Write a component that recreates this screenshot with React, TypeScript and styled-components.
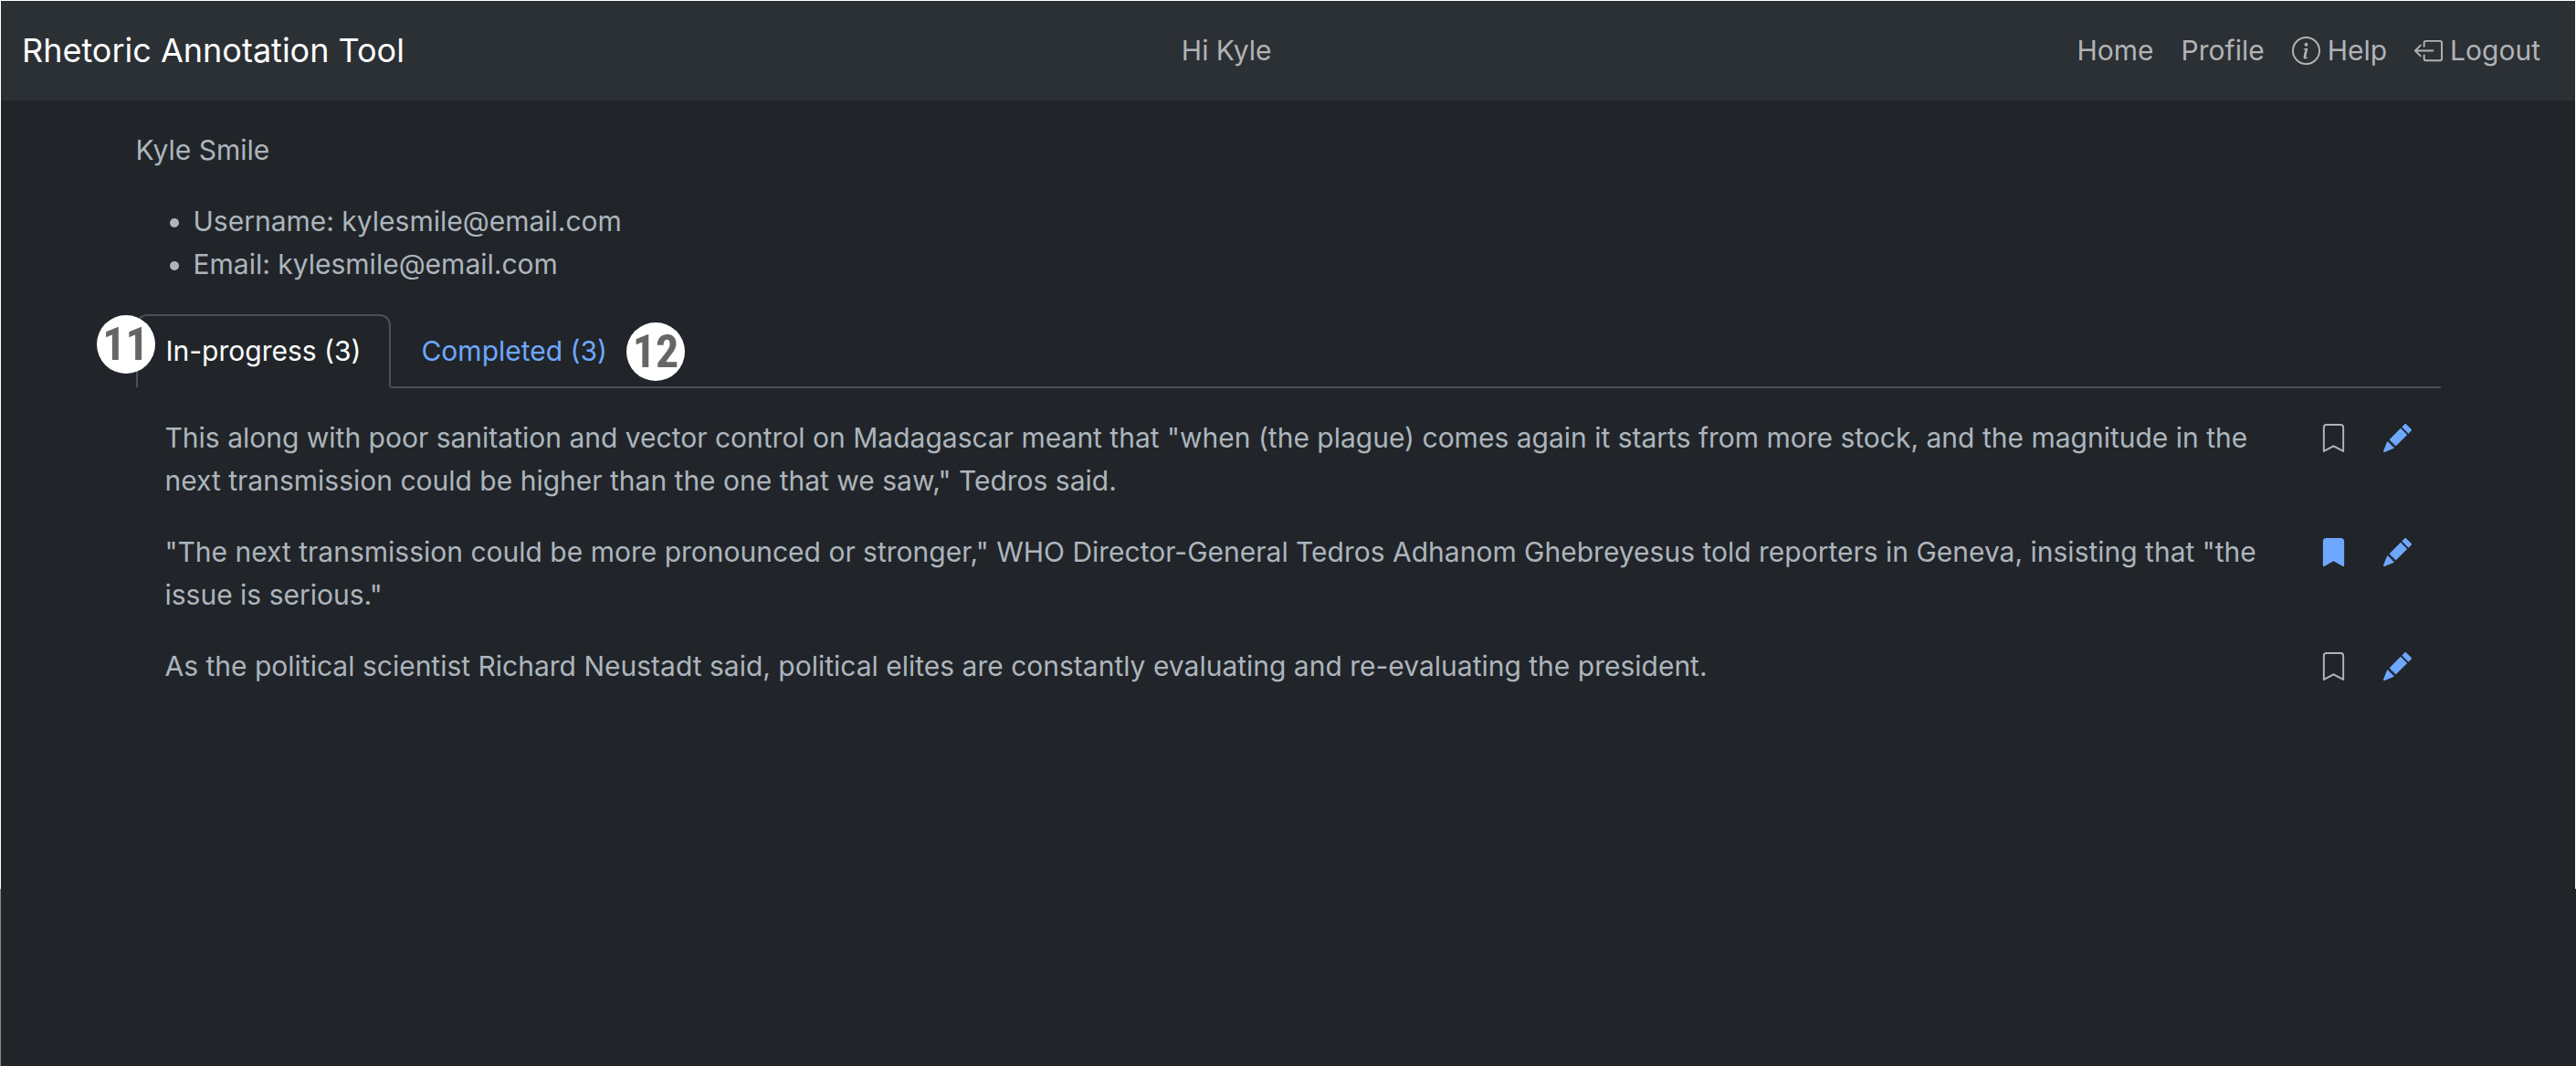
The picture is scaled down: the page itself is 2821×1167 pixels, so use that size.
import React, { useState } from "react";
import styled, { createGlobalStyle } from "styled-components";
import {
  BsBookmark,
  BsBookmarkFill,
  BsBoxArrowLeft,
  BsInfoCircle,
  BsPencilFill,
} from "react-icons/bs";

const color = {
  page: "#212529",
  bar: "#2b3035",
  text: "#adb5bd",
  nav: "#b1b3b5",
  strong: "#ffffff",
  link: "#6ea8fe",
  border: "#495057",
  badge: "#666666",
  edge: "#868a8d",
};

const GlobalStyle = createGlobalStyle`
  *, *::before, *::after { box-sizing: border-box; }
  body {
    margin: 0;
    min-height: 100vh;
    background: linear-gradient(90deg, ${color.edge} 1px, ${color.page} 1px);
    color: ${color.text};
    font-family: Inter, "Liberation Sans", sans-serif;
    font-size: 30px;
    line-height: 47px;
  }
`;

const Frame = styled.div`
  min-height: 973px;
  border: 1px solid ${color.strong};
  border-bottom: 0;
  background: ${color.page};
`;

const Navbar = styled.header`
  display: flex;
  align-items: center;
  justify-content: space-between;
  padding: 25px 23px;
  background: ${color.bar};
`;

const Brand = styled.a`
  color: ${color.strong};
  font-size: 36px;
  line-height: 59px;
  text-decoration: none;
`;

const Greeting = styled.span`
  padding-right: 16px;
  color: ${color.nav};
`;

const NavLinks = styled.nav`
  display: flex;
`;

const NavLink = styled.a`
  display: flex;
  align-items: center;
  gap: 8px;
  padding: 0 15px;
  color: ${color.nav};
  text-decoration: none;

  svg {
    width: 31px;
    height: 31px;
  }
`;

const Container = styled.main`
  max-width: 2570px;
  margin: 0 auto;
  padding: 31px 23px;
`;

const ProfileName = styled.p`
  margin: 0 0 31px;
`;

const Details = styled.ul`
  margin: 0 0 31px;
  padding-left: 63px;
`;

const TabList = styled.div`
  display: flex;
  border-bottom: 2px solid ${color.border};
`;

const TabItem = styled.div`
  position: relative;
  margin-bottom: -2px;
`;

const Tab = styled.button<{ $active: boolean }>`
  display: block;
  padding: 15px 31px;
  border: 2px solid ${(p) => (p.$active ? color.border : "transparent")};
  border-bottom-color: ${(p) => (p.$active ? color.page : "transparent")};
  border-radius: 12px 12px 0 0;
  background: ${(p) => (p.$active ? color.page : "transparent")};
  color: ${(p) => (p.$active ? color.strong : color.link)};
  font: inherit;
  cursor: pointer;
`;

const Badge = styled.span<{ $side: "left" | "right" }>`
  position: absolute;
  top: ${(p) => (p.$side === "left" ? "1px" : "9px")};
  ${(p) => (p.$side === "left" ? "left: -43px;" : "right: -52px;")}
  width: 64px;
  height: 64px;
  border-radius: 50%;
  background: ${color.strong};
  color: ${color.badge};
  font-family: "Roboto Condensed", "Liberation Sans", sans-serif;
  font-size: 50px;
  font-weight: 700;
  line-height: 64px;
  text-align: center;
`;

const Entries = styled.ul`
  display: flex;
  flex-direction: column;
  gap: 31px;
  margin: 0;
  padding: 31px 32px;
  list-style: none;
`;

const Entry = styled.li`
  display: flex;
  align-items: flex-start;
  justify-content: space-between;
  gap: 39px;
`;

const EntryText = styled.p`
  flex: 1;
  margin: 0;
`;

const Actions = styled.div`
  display: flex;
  gap: 39px;
`;

const IconButton = styled.button<{ $accent: boolean }>`
  display: flex;
  align-items: center;
  height: 47px;
  padding: 0;
  border: 0;
  background: none;
  color: ${(p) => (p.$accent ? color.link : color.text)};
  cursor: pointer;

  svg {
    width: 31px;
    height: 31px;
  }
`;

const sentences = [
  'This along with poor sanitation and vector control on Madagascar meant that "when (the plague) comes again it starts from more stock, and the magnitude in the next transmission could be higher than the one that we saw," Tedros said.',
  '"The next transmission could be more pronounced or stronger," WHO Director-General Tedros Adhanom Ghebreyesus told reporters in Geneva, insisting that "the issue is serious."',
  "As the political scientist Richard Neustadt said, political elites are constantly evaluating and re-evaluating the president.",
];

const tabs = [
  { id: "progress", label: "In-progress (3)", badge: "11", side: "left" as const },
  { id: "completed", label: "Completed (3)", badge: "12", side: "right" as const },
];

export default function App() {
  const [active, setActive] = useState("progress");
  const [marked, setMarked] = useState([false, true, false]);

  const toggle = (index: number) =>
    setMarked((all) => all.map((value, i) => (i === index ? !value : value)));

  return (
    <>
      <GlobalStyle />
      <Frame>
        <Navbar>
          <Brand href="#home">Rhetoric Annotation Tool</Brand>
          <Greeting>Hi Kyle</Greeting>
          <NavLinks>
            <NavLink href="#home">Home</NavLink>
            <NavLink href="#profile">Profile</NavLink>
            <NavLink href="#help">
              <BsInfoCircle />
              Help
            </NavLink>
            <NavLink href="#logout">
              <BsBoxArrowLeft />
              Logout
            </NavLink>
          </NavLinks>
        </Navbar>
        <Container>
          <ProfileName>Kyle Smile</ProfileName>
          <Details>
            <li>Username: kylesmile@email.com</li>
            <li>Email: kylesmile@email.com</li>
          </Details>
          <TabList role="tablist">
            {tabs.map((tab) => (
              <TabItem key={tab.id} role="presentation">
                <Tab
                  type="button"
                  role="tab"
                  aria-selected={active === tab.id}
                  $active={active === tab.id}
                  onClick={() => setActive(tab.id)}
                >
                  {tab.label}
                </Tab>
                <Badge $side={tab.side}>{tab.badge}</Badge>
              </TabItem>
            ))}
          </TabList>
          <Entries role="tabpanel">
            {sentences.map((sentence, i) => (
              <Entry key={sentence}>
                <EntryText>{sentence}</EntryText>
                <Actions>
                  <IconButton
                    type="button"
                    aria-label="Bookmark"
                    aria-pressed={marked[i]}
                    $accent={marked[i]}
                    onClick={() => toggle(i)}
                  >
                    {marked[i] ? <BsBookmarkFill /> : <BsBookmark />}
                  </IconButton>
                  <IconButton type="button" aria-label="Edit" $accent>
                    <BsPencilFill />
                  </IconButton>
                </Actions>
              </Entry>
            ))}
          </Entries>
        </Container>
      </Frame>
    </>
  );
}
